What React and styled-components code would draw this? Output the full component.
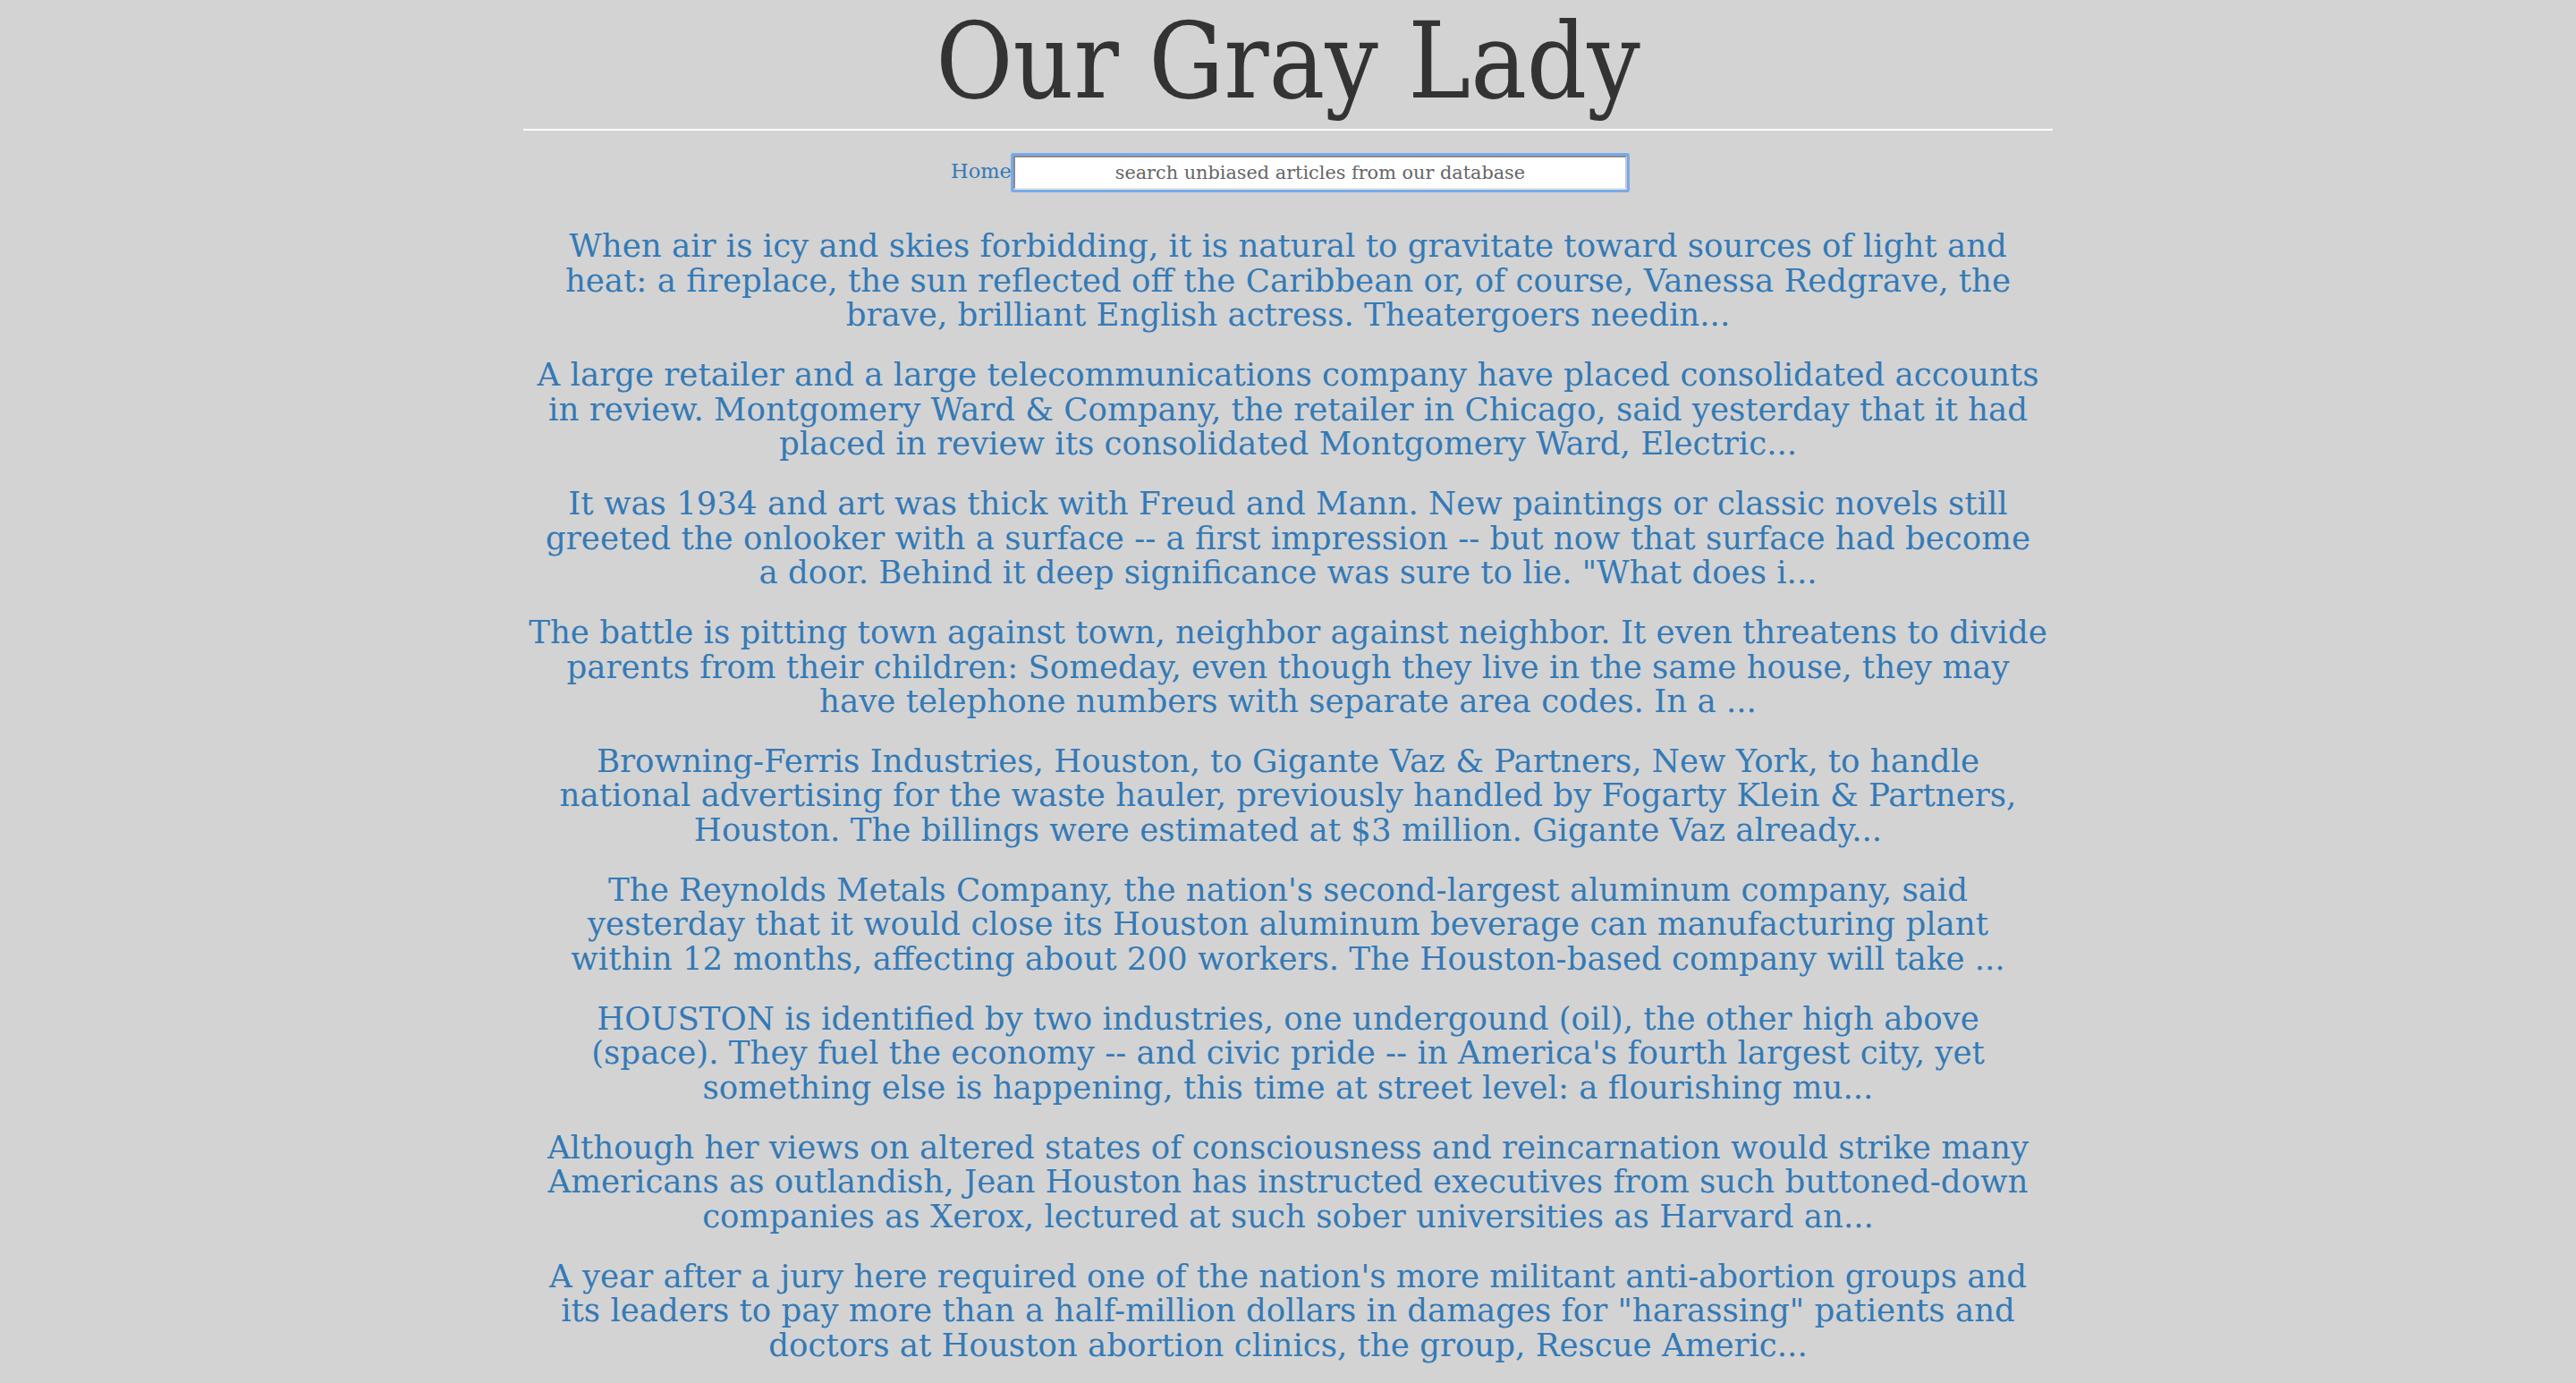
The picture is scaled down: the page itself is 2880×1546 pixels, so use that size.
import React from "react";
import styled, { createGlobalStyle } from "styled-components";

const GlobalStyle = createGlobalStyle`
  html, body {
    margin: 0;
    padding: 0;
    background: #d3d3d3;
  }
`;

const Page = styled.div`
  min-height: 1546px;
  background: #d3d3d3;
`;

const Container = styled.div`
  width: 1710px;
  margin: 0 auto;
`;

const Title = styled.h1`
  margin: 0;
  padding-top: 4px;
  height: 140px;
  text-align: center;
  font-family: "DejaVu Serif Condensed", "DejaVu Serif", serif;
  font-stretch: condensed;
  font-weight: normal;
  font-size: 117px;
  line-height: 130px;
  color: #333;
`;

const Rule = styled.hr`
  margin: 0;
  border: none;
  border-top: 2px solid #fff;
`;

const Nav = styled.div`
  display: flex;
  justify-content: center;
  align-items: center;
  gap: 2px;
  margin-top: 28px;
  padding-left: 2px;
`;

const HomeLink = styled.a`
  font-family: "DejaVu Serif", serif;
  font-size: 22.5px;
  color: #337ab7;
  text-decoration: none;
  margin-top: -4px;
`;

const SearchInput = styled.input`
  box-sizing: border-box;
  width: 686px;
  height: 38px;
  border: 2px solid;
  border-color: #8a8a8a #c8c8c8 #e6e6e6 #8a8a8a;
  border-radius: 1px;
  outline: none;
  box-shadow: 0 0 0 3px #78aaea;
  background: #fff;
  text-align: center;
  font-family: "DejaVu Serif", serif;
  font-size: 20.8px;
  color: #555;
  &::placeholder {
    color: #666;
    opacity: 1;
  }
`;

const ArticleList = styled.div`
  display: flex;
  flex-direction: column;
  gap: 28.2px;
  margin-top: 44px;
`;

const Article = styled.a`
  display: block;
  text-align: center;
  font-family: "DejaVu Serif", serif;
  font-size: 35.6px;
  line-height: 38.6px;
  color: #337ab7;
  text-decoration: none;
`;

const Line = styled.span`
  display: block;
  white-space: nowrap;
`;

const articles = [
  [
    "When air is icy and skies forbidding, it is natural to gravitate toward sources of light and",
    "heat: a fireplace, the sun reflected off the Caribbean or, of course, Vanessa Redgrave, the",
    "brave, brilliant English actress. Theatergoers needin...",
  ],
  [
    "A large retailer and a large telecommunications company have placed consolidated accounts",
    "in review. Montgomery Ward & Company, the retailer in Chicago, said yesterday that it had",
    "placed in review its consolidated Montgomery Ward, Electric...",
  ],
  [
    "It was 1934 and art was thick with Freud and Mann. New paintings or classic novels still",
    "greeted the onlooker with a surface -- a first impression -- but now that surface had become",
    'a door. Behind it deep significance was sure to lie. "What does i...',
  ],
  [
    "The battle is pitting town against town, neighbor against neighbor. It even threatens to divide",
    "parents from their children: Someday, even though they live in the same house, they may",
    "have telephone numbers with separate area codes. In a ...",
  ],
  [
    "Browning-Ferris Industries, Houston, to Gigante Vaz & Partners, New York, to handle",
    "national advertising for the waste hauler, previously handled by Fogarty Klein & Partners,",
    "Houston. The billings were estimated at $3 million. Gigante Vaz already...",
  ],
  [
    "The Reynolds Metals Company, the nation's second-largest aluminum company, said",
    "yesterday that it would close its Houston aluminum beverage can manufacturing plant",
    "within 12 months, affecting about 200 workers. The Houston-based company will take ...",
  ],
  [
    "HOUSTON is identified by two industries, one undergound (oil), the other high above",
    "(space). They fuel the economy -- and civic pride -- in America's fourth largest city, yet",
    "something else is happening, this time at street level: a flourishing mu...",
  ],
  [
    "Although her views on altered states of consciousness and reincarnation would strike many",
    "Americans as outlandish, Jean Houston has instructed executives from such buttoned-down",
    "companies as Xerox, lectured at such sober universities as Harvard an...",
  ],
  [
    "A year after a jury here required one of the nation's more militant anti-abortion groups and",
    'its leaders to pay more than a half-million dollars in damages for "harassing" patients and',
    "doctors at Houston abortion clinics, the group, Rescue Americ...",
  ],
];

const App = () => {
  return (
    <Page>
      <GlobalStyle />
      <Container>
        <Title>Our Gray Lady</Title>
        <Rule />
        <Nav>
          <HomeLink href="#">Home</HomeLink>
          <SearchInput
            autoFocus
            placeholder="search unbiased articles from our database"
          />
        </Nav>
        <ArticleList>
          {articles.map((lines, index) => (
            <Article key={index} href="#">
              {lines.map((line, i) => (
                <Line key={i}>{line}</Line>
              ))}
            </Article>
          ))}
        </ArticleList>
      </Container>
    </Page>
  );
};

export default App;
